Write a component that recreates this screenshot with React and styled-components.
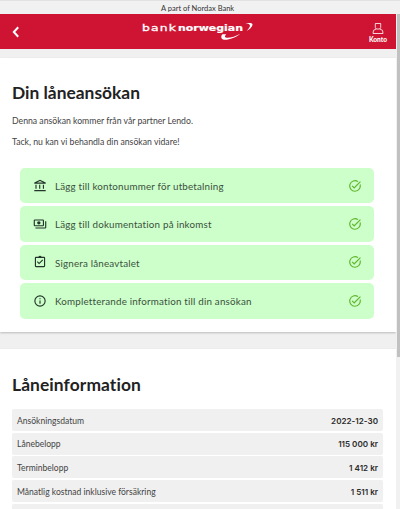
import React from "react";
import styled, { createGlobalStyle } from "styled-components";

const Global = createGlobalStyle`
  * { box-sizing: border-box; }
  body { margin: 0; background: #f0f0f0; font-family: Lato, "Open Sans", sans-serif; color: #444; overflow: hidden; }
  h1, p, ul, dl, dt, dd { margin: 0; padding: 0; }
`;

const Shell = styled.div`
  display: flex;
  flex-direction: column;
  height: 509px;
  overflow: hidden;
`;

const Notice = styled.div`
  flex: none;
  height: 14px;
  padding-left: 161px;
  border-top: 1px solid #e2e2e2;
  background: #f1f1f1;
  font-size: 7.5px;
  line-height: 15px;
  white-space: nowrap;
  color: #333;
`;

const Viewport = styled.div`
  flex: 1;
  min-height: 0;
  display: flex;
`;

const Content = styled.main`
  width: 396px;
  overflow: hidden;
`;

const Scrollbar = styled.div`
  width: 4px;
  padding-left: 1px;
  background: #f1f1f1;
`;

const Thumb = styled.div`
  height: 343px;
  background: #c1c1c1;
`;

const Header = styled.header`
  display: grid;
  grid-template-columns: 142px 1fr 36px;
  height: 35px;
  background: #ce1432;
  color: #fff;
`;

const BackButton = styled.button`
  display: flex;
  align-items: flex-start;
  padding: 12px 0 0 12px;
  border: 0;
  background: none;
  color: inherit;
`;

const Brand = styled.div`
  display: flex;
  align-items: flex-start;
  height: 28px;
  padding-top: 7px;
  font-family: "DejaVu Sans", sans-serif;
  line-height: 13px;
  white-space: nowrap;
`;

const BrandWord = styled.span`
  flex: none;
  width: ${(p) => p.$width}px;
  font-size: 9.2px;
  font-weight: ${(p) => (p.$strong ? 700 : 400)};
  letter-spacing: ${(p) => p.$spacing}px;
  transform: scaleX(${(p) => p.$stretch});
  transform-origin: left;
  -webkit-text-stroke: ${(p) => (p.$strong ? 0.2 : 0.3)}px #fff;
`;

const Swoosh = styled.svg`
  flex: none;
  width: 34px;
  height: 20px;
  margin: 1px 0 0 -23px;
`;

const Account = styled.div`
  display: flex;
  flex-direction: column;
  align-items: center;
  padding-top: 8px;
  font-size: 6.6px;
  line-height: 9px;
  font-weight: 900;
`;

const Panel = styled.section`
  height: ${(p) => p.$height}px;
  margin-top: ${(p) => p.$gap}px;
  padding: ${(p) => p.$top}px 13px 0 12px;
  background: #fff;
  box-shadow: 0 1px 2px #bbb;
`;

const Title = styled.h1`
  height: 24px;
  font-size: 17.4px;
  line-height: 24px;
  font-weight: 700;
  letter-spacing: ${(p) => p.$spacing || 0}px;
  color: #222;
`;

const Paragraph = styled.p`
  margin-top: ${(p) => p.$gap}px;
  font-size: 8.7px;
  line-height: 12px;
`;

const Steps = styled.ul`
  display: grid;
  gap: 3px;
  margin: 20px 9px 0 8px;
  list-style: none;
`;

const Step = styled.li`
  display: grid;
  grid-template-columns: 23px 1fr 12px;
  align-items: center;
  height: 35.4px;
  padding: 0 14px 0 12px;
  border-radius: 5px;
  background: #ccffc9;
  font-size: 9.8px;
  letter-spacing: 0.19px;
  color: #3c5040;
`;

const StepLabel = styled.span`
  padding-top: 0.6px;
`;

const StepIcon = styled.svg`
  width: 16px;
  height: 14px;
  fill: #23352a;
`;

const DoneIcon = styled.svg`
  width: 14px;
  height: 14px;
  fill: #62b52c;
`;

const Facts = styled.dl`
  display: grid;
  gap: 1.7px;
  margin-top: 12px;
`;

const Fact = styled.div`
  display: flex;
  justify-content: space-between;
  align-items: center;
  height: 22px;
  padding: 1px 5px 0;
  border-radius: 2px;
  background: #f0f0f0;
  font-size: 8.55px;
`;

const FactValue = styled.dd`
  font-family: Inter, sans-serif;
  font-size: 8.1px;
  font-weight: 600;
  color: #2c2c2c;
`;

const steps = [
  ["Lägg till kontonummer för utbetalning", "M4 10h2v7H4zm6.5 0h2v7h-2zM2 19h20v2H2zm15-9h2v7h-2zM12 1 2 6v2h20V6zm-5.3 5L12 3.3 17.3 6z"],
  ["Lägg till dokumentation på inkomst", "M19 14V6a2 2 0 0 0-2-2H3a2 2 0 0 0-2 2v8a2 2 0 0 0 2 2h14a2 2 0 0 0 2-2zm-2 0H3V6h14zM10 7a3 3 0 1 0 0 6 3 3 0 0 0 0-6zM23 7v11a2 2 0 0 1-2 2H4v-2h17V7z"],
  ["Signera låneavtalet", "M19 3h-4.2a3 3 0 0 0-5.6 0H5a2 2 0 0 0-2 2v14a2 2 0 0 0 2 2h14a2 2 0 0 0 2-2V5a2 2 0 0 0-2-2zm0 16H5V5h14zM17.5 9 16.1 7.6l-5.6 5.6-2.6-2.6L6.5 12l4 4z"],
  ["Kompletterande information till din ansökan", "M11 7h2v2h-2zm0 4h2v6h-2zm1-9a10 10 0 1 0 0 20 10 10 0 0 0 0-20zm0 18a8 8 0 1 1 0-16 8 8 0 0 1 0 16z"],
];

const facts = [
  ["Ansökningsdatum", "2022-12-30"],
  ["Lånebelopp", "115 000 kr"],
  ["Terminbelopp", "1 412 kr"],
  ["Månatlig kostnad inklusive försäkring", "1 511 kr"],
  ["", ""],
];

export default function App() {
  return (
    <Shell>
      <Global />
      <Notice>A part of Nordax Bank</Notice>
      <Viewport>
        <Content>
          <Header>
            <BackButton aria-label="Tillbaka">
              <svg width="8" height="12" viewBox="0 0 8 12" fill="none" stroke="#fff" strokeWidth="2">
                <path d="M6.2 1.3 1.8 6l4.4 4.7" />
              </svg>
            </BackButton>
            <Brand>
              <BrandWord $width={36} $spacing={0.85} $stretch={1.35}>bank</BrandWord>
              <BrandWord $strong $width={66} $spacing={0} $stretch={1.19}>norwegian</BrandWord>
              <Swoosh viewBox="0 0 34 20" fill="#fff">
                <path d="M24.5 1.6C28 .8 32 .8 31.5 3c-.4 2-3 4.600-6 6 1.700-1.700 3.400-3.900 3.500-5.300.1-1.400-2-1.900-4.500-2.100z" />
                <path d="M1.500 12.200C0 13.600-.4 16.600 2 17.500c4.300 1.200 12.500-1.800 17.300-5.800-4.600 2.600-11.600 4.800-14.400 3.900-1.500-.5-1.100-1.900.3-3.400z" />
              </Swoosh>
            </Brand>
            <Account>
              <svg width="12" height="13" viewBox="0 0 12 13" fill="none" stroke="#fff" strokeWidth=".8">
                <path d="M3.300 1.500h5.400v4L7.800 7H4.200l-.9-1.500zM4.200 7 1.500 8.300 1 11.500h10l-.5-3.200L7.800 7" />
              </svg>
              Konto
            </Account>
          </Header>
          <Panel $height={274} $gap={9} $top={23}>
            <Title>Din låneansökan</Title>
            <Paragraph $gap={10}>Denna ansökan kommer från vår partner Lendo.</Paragraph>
            <Paragraph $gap={9}>Tack, nu kan vi behandla din ansökan vidare!</Paragraph>
            <Steps>
              {steps.map(([label, path]) => (
                <Step key={label}>
                  <StepIcon viewBox="-2 0 28 24"><path fillRule="evenodd" d={path} /></StepIcon>
                  <StepLabel>{label}</StepLabel>
                  <DoneIcon viewBox="0 0 24 24">
                    <path d="M22 5.200 10.600 16.600l-4.200-4.200 1.400-1.400 2.800 2.800L20.600 3.800zM19.800 10.200A8 8 0 1 1 16.400 5.300l1.400-1.500A10 10 0 1 0 21.400 8.600z" />
                  </DoneIcon>
                </Step>
              ))}
            </Steps>
          </Panel>
          <Panel $height={200} $gap={17} $top={24}>
            <Title $spacing={0.1}>Låneinformation</Title>
            <Facts>
              {facts.map(([label, value]) => (
                <Fact key={label}><dt>{label}</dt><FactValue>{value}</FactValue></Fact>
              ))}
            </Facts>
          </Panel>
        </Content>
        <Scrollbar><Thumb /></Scrollbar>
      </Viewport>
    </Shell>
  );
}
